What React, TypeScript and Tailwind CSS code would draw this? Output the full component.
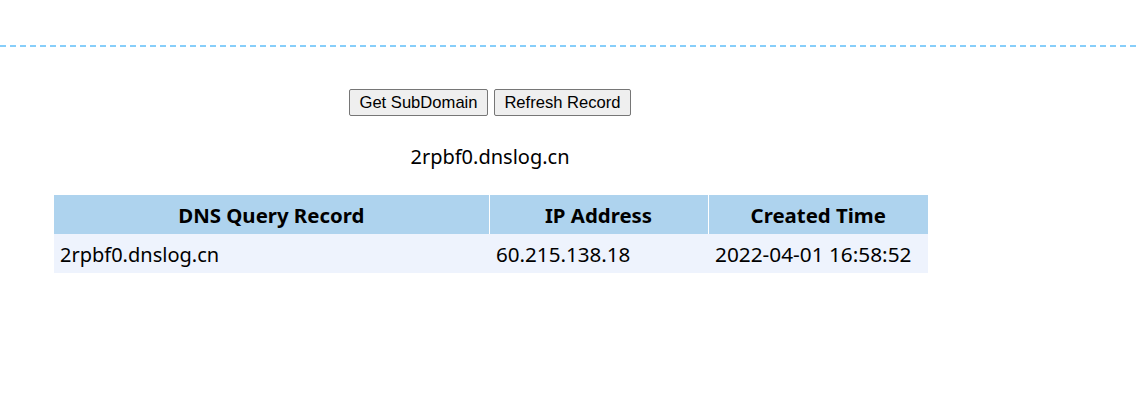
import React from "react";

export default function App() {
  const font = { fontFamily: '"Noto Sans", "Open Sans", "Noto Sans CJK SC", sans-serif' };
  return (
    <div className="w-[1136px] h-[395px] bg-white overflow-hidden">
      <div className="h-[45px]" />
      <div className="w-full border-t-2 border-dashed border-[#87cefa]" />
      <div className="w-[980px] flex flex-col items-center">
        <div className="mt-[42px] flex gap-[6px]" style={{ fontFamily: '"Liberation Sans", Arial, sans-serif' }}>
          <button className="w-[139px] h-[27px] pt-[2px] bg-[#efefef] border border-[#767676] rounded-[2px] text-[16.6px] text-black leading-none">
            Get SubDomain
          </button>
          <button className="w-[137px] h-[27px] pt-[2px] bg-[#efefef] border border-[#767676] rounded-[2px] text-[16.6px] text-black leading-none">
            Refresh Record
          </button>
        </div>
        <div className="mt-[28px] h-[26px] text-[20px] leading-[26px] text-black" style={font}>
          2rpbf0.dnslog.cn
        </div>
        <table className="mt-[25px] ml-[2px] table-fixed border-collapse text-[20px] text-black" style={font}>
          <colgroup>
            <col className="w-[435px]" />
            <col className="w-[219px]" />
            <col className="w-[220px]" />
          </colgroup>
          <thead>
            <tr className="h-[39px] bg-[#aed3ee]">
              <th className="font-bold text-[20.4px] text-center border-r border-white px-0 pt-[2px] pb-0">DNS Query Record</th>
              <th className="font-bold text-[20.4px] text-center border-r border-white px-0 pt-[2px] pb-0">IP Address</th>
              <th className="font-bold text-[20.4px] text-center px-0 pt-[2px] pb-0">Created Time</th>
            </tr>
          </thead>
          <tbody>
            <tr className="h-[39px] bg-[#eef3fd]">
              <td className="pl-[6px] pt-[2px] text-left">2rpbf0.dnslog.cn</td>
              <td className="pl-[7px] pt-[2px] text-left text-[20.6px]">60.215.138.18</td>
              <td className="pl-[7px] pt-[2px] text-left text-[20.8px]">2022-04-01 16:58:52</td>
            </tr>
          </tbody>
        </table>
      </div>
    </div>
  );
}
